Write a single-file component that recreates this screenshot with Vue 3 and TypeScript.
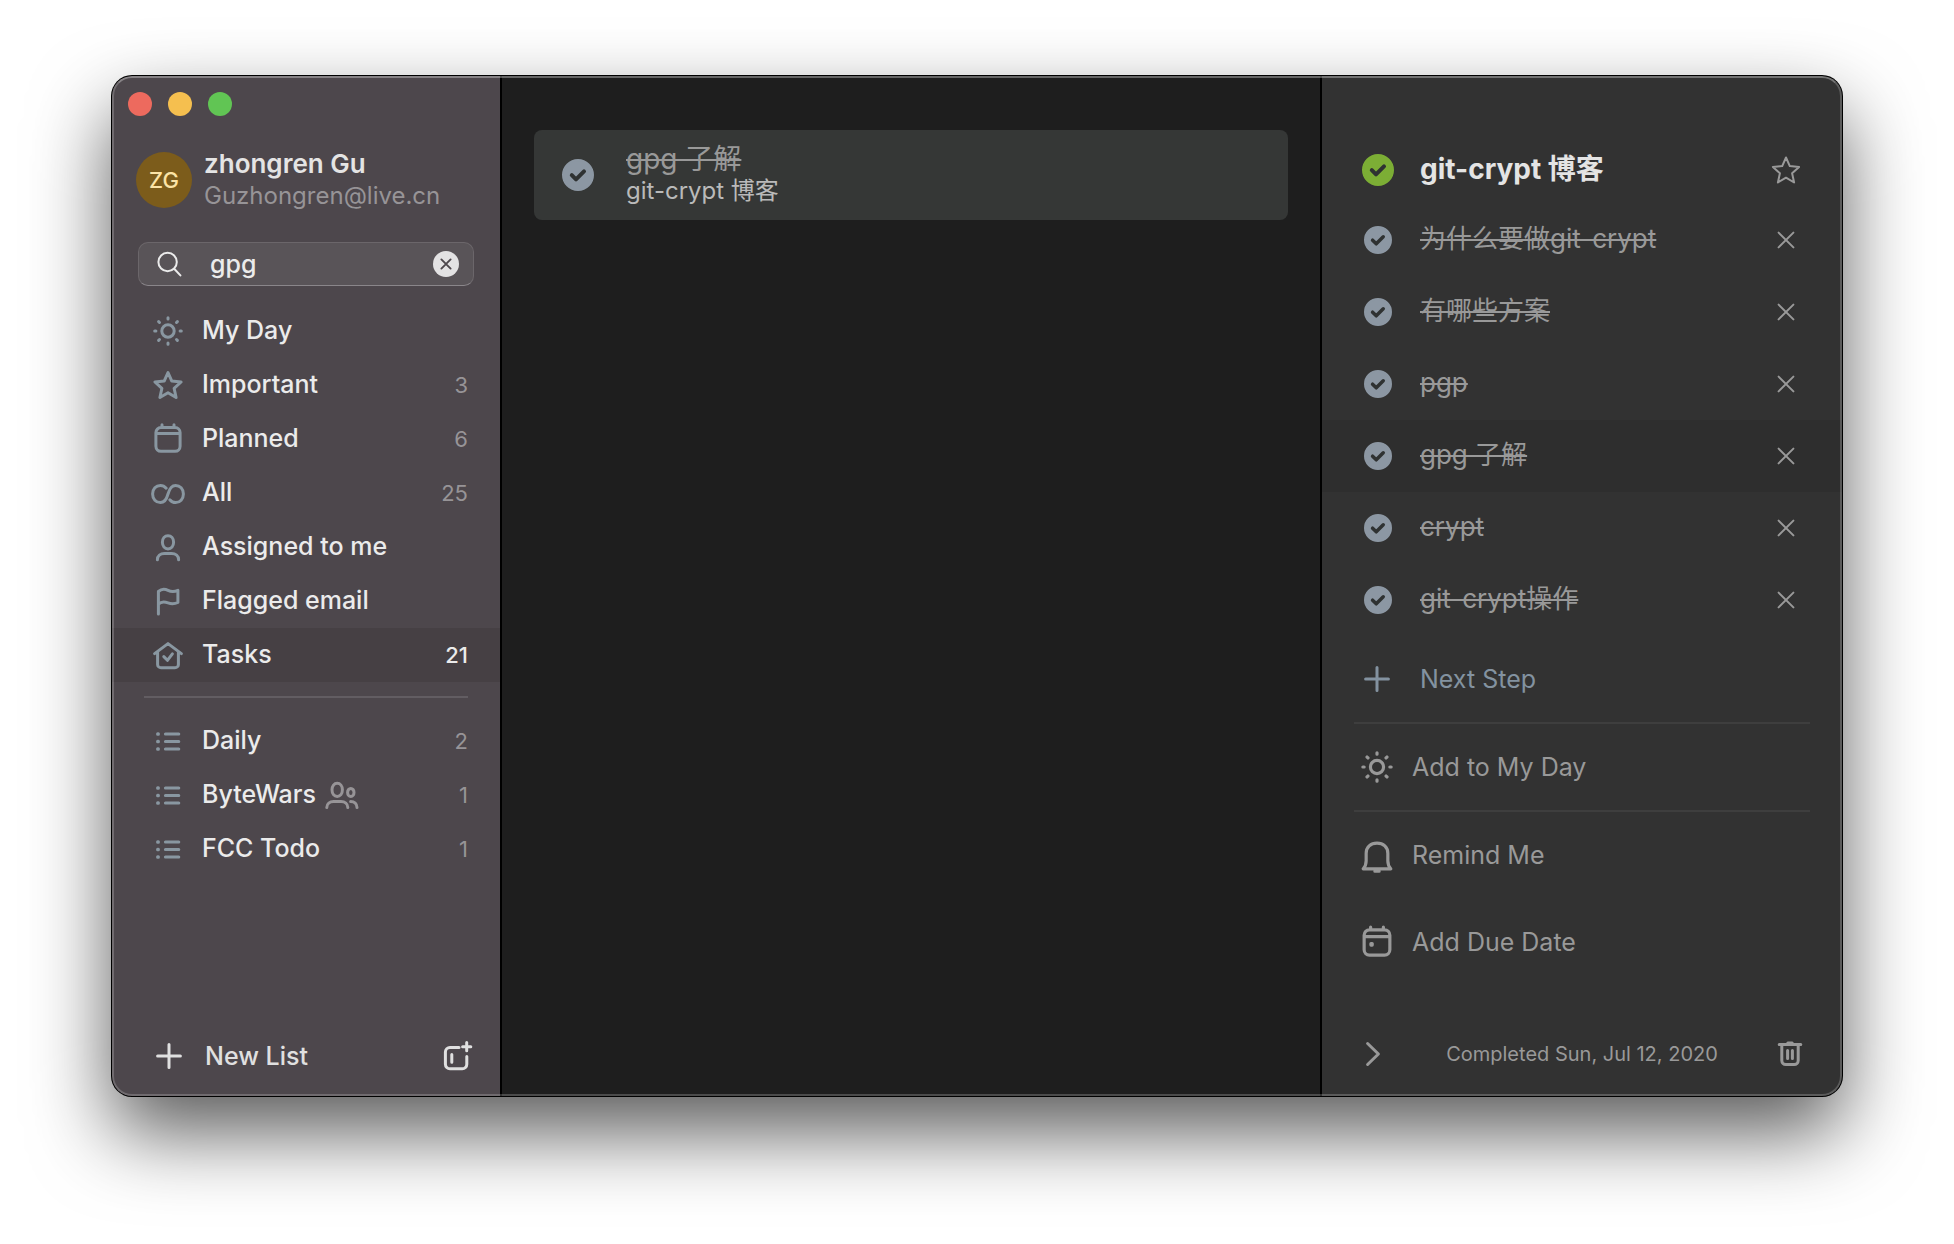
<script setup lang="ts">
import { computed, ref } from 'vue'

interface NavItem {
  label: string
  icon: string
  count?: number
  selected?: boolean
  shared?: boolean
}

interface Step {
  id: number
  text: string
  done: boolean
}

const icons: Record<string, string> = {
  sun: 'M16 9.8a6.2 6.2 0 1 1 0 12.4 6.2 6.2 0 0 1 0-12.4zM16 2.7v1.2M16 28.1v1.2M2.7 16h1.2M28.1 16h1.2M6.6 6.6l.9.9M24.5 24.5l.9.9M25.4 6.6l-.9.9M7.5 24.5l-.9.9',
  star: 'M16 3.5l3.8 8.6 9.3.9-7 6.3 2 9.2-8.1-4.8-8.1 4.8 2-9.2-7-6.3 9.3-.9z',
  calendar: 'M8.9 4.6h14.2a5 5 0 0 1 5 5v13.7a5 5 0 0 1-5 5H8.9a5 5 0 0 1-5-5V9.6a5 5 0 0 1 5-5zM4 10.6h24M10 1.8v2.6M22 1.8v2.6',
  due: 'M8.9 4.6h14.2a5 5 0 0 1 5 5v13.7a5 5 0 0 1-5 5H8.9a5 5 0 0 1-5-5V9.6a5 5 0 0 1 5-5zM4 11h24M10 2v2.6M22 2v2.6M10.3 17.5h1.2v1.4h-1.2z',
  infinity: 'M14.2 11.2C12.6 9.2 10.6 8.4 8.4 8.4 4 8.4.6 11.8.6 17s3.4 8.6 7.8 8.6c4 0 6-2.6 7.6-8.6 1.6-6 3.6-8.6 7.6-8.6 4.4 0 7.8 3.4 7.8 8.6s-3.4 8.6-7.8 8.6c-2.2 0-4.2-.8-5.8-2.8',
  person: 'M16 4.7c3.2 0 5.6 2.8 5.6 6.6s-2.4 6.6-5.6 6.6-5.6-2.8-5.6-6.6 2.4-6.6 5.6-6.6zM5.4 28.8c0-4 3-6.2 7-6.2h7.2c4 0 7 2.2 7 6.2',
  flag: 'M6.4 29V6.5c3-2.6 6.5-2.6 9.6-1.1s6.5 1.5 9.9 0v12.1c-3.4 1.6-6.8 1.6-9.9.4s-6.6-1.6-9.6 1.2',
  home: 'M2.6 14.6L16 4.6l13.4 10M5.6 13v12.4A3.4 3.4 0 0 0 9 28.8h14a3.4 3.4 0 0 0 3.4-3.4V13M11.8 17.6l3.6 3.7 5-6.4',
  list: 'M13.4 9h13.4M13.4 16.5h13.4M13.4 24h13.4M5.6 8.7h.8v.6h-.8zM5.6 16.2h.8v.6h-.8zM5.6 23.7h.8v.6h-.8z',
  group: 'M11.2 4.2c3 0 5.2 2.8 5.2 6.6s-2.2 6.6-5.2 6.6S6 14.6 6 10.8s2.2-6.6 5.2-6.6zM24.8 9.4c1.8 0 3.2 1.7 3.2 4s-1.4 4-3.2 4-3.2-1.7-3.2-4 1.4-4 3.2-4zM.8 28.6c0-3.8 3-6 6.8-6H15c3.8 0 6.8 2.2 6.8 6M24.6 22.4c3.8 0 6.4 2.2 6.4 6.2',
  newGroup: 'M17 7.4H8A4.6 4.6 0 0 0 3.4 12v12.2A4.6 4.6 0 0 0 8 28.8h12.2a4.6 4.6 0 0 0 4.6-4.6v-7.6M24.7 2.6v8.2M20.6 6.7h8.2M9.8 14.6v7.6',
  plus: 'M16 4.6v22.8M4.6 16h22.8',
  search: 'M14.6 4.8a9.2 9.2 0 1 1 0 18.4 9.2 9.2 0 0 1 0-18.4zM21.4 21l6 6.4',
  close: 'M8.6 8.6l14.8 14.8M23.4 8.6L8.6 23.4',
  bell: 'M3 29c2-2 2.8-4.4 2.8-7.5v-7C5.8 8.600 10 4.8 16 4.8s10.2 3.8 10.2 9.7v7c0 3.1.8 5.5 2.8 7.500zM14 31.2h4',
  chevron: 'M9.600 5.5L20.4 16 9.6 26.5',
  trash: 'M5.2 6.6h21.6M13.8 5h4.4M7.8 7v15.5a4 4 0 0 0 4 4h8.4a4 4 0 0 0 4-4V7M13.6 12.6v7.8M18.4 12.6v7.8',
  tick: 'M9.8 16.2l4.2 4.2 8-8',
}

const smartLists: NavItem[] = [
  { label: 'My Day', icon: 'sun' },
  { label: 'Important', icon: 'star', count: 3 },
  { label: 'Planned', icon: 'calendar', count: 6 },
  { label: 'All', icon: 'infinity', count: 25 },
  { label: 'Assigned to me', icon: 'person' },
  { label: 'Flagged email', icon: 'flag' },
  { label: 'Tasks', icon: 'home', count: 21, selected: true },
]

const ownLists: NavItem[] = [
  { label: 'Daily', icon: 'list', count: 2 },
  { label: 'ByteWars', icon: 'list', count: 1, shared: true },
  { label: 'FCC Todo', icon: 'list', count: 1 },
]

const navGroups = [
  { name: 'Smart lists', items: smartLists },
  { name: 'Lists', items: ownLists },
]

const query = ref('gpg')
const taskDone = ref(true)
const activeStep = ref(4)
const steps = ref<Step[]>([
  { id: 1, text: '为什么要做git-crypt', done: true },
  { id: 2, text: '有哪些方案', done: true },
  { id: 3, text: 'pgp', done: true },
  { id: 4, text: 'gpg 了解', done: true },
  { id: 5, text: 'crypt', done: true },
  { id: 6, text: 'git-crypt操作', done: true },
])

const matchedSteps = computed(() =>
  query.value ? steps.value.filter((s) => s.text.includes(query.value)) : [],
)

function removeStep(id: number) {
  steps.value = steps.value.filter((s) => s.id !== id)
}
</script>

<template>
  <div class="desktop">
    <div class="window">
      <aside class="sidebar">
        <div class="lights">
          <button class="light red" aria-label="Close"></button>
          <button class="light yellow" aria-label="Minimize"></button>
          <button class="light green" aria-label="Zoom"></button>
        </div>

        <div class="account">
          <span class="avatar">ZG</span>
          <div class="who">
            <span class="name">zhongren Gu</span>
            <span class="mail">Guzhongren@live.cn</span>
          </div>
        </div>

        <div class="search">
          <svg class="icon" viewBox="0 0 32 32"><path :d="icons.search" /></svg>
          <input v-model="query" type="text" aria-label="Search" />
          <button class="clear" aria-label="Clear search" @click="query = ''">
            <svg class="icon" viewBox="0 0 32 32"><path :d="icons.close" /></svg>
          </button>
        </div>

        <nav v-for="group in navGroups" :key="group.name" class="nav" :aria-label="group.name">
          <a
            v-for="item in group.items"
            :key="item.label"
            href="#"
            class="nav-item"
            :class="{ selected: item.selected }"
          >
            <svg class="icon" viewBox="0 0 32 32"><path :d="icons[item.icon]" /></svg>
            <span class="label">{{ item.label }}</span>
            <svg v-if="item.shared" class="icon shared" viewBox="0 0 32 32">
              <path :d="icons.group" />
            </svg>
            <span v-if="item.count" class="count">{{ item.count }}</span>
          </a>
        </nav>

        <div class="sidebar-foot">
          <button class="new-list">
            <svg class="icon" viewBox="0 0 32 32"><path :d="icons.plus" /></svg>
            <span>New List</span>
          </button>
          <button aria-label="New group">
            <svg class="icon" viewBox="0 0 32 32"><path :d="icons.newGroup" /></svg>
          </button>
        </div>
      </aside>

      <main class="results">
        <article v-for="step in matchedSteps" :key="step.id" class="card">
          <label class="check">
            <input v-model="step.done" type="checkbox" :aria-label="step.text" />
            <svg viewBox="0 0 32 32"><path :d="icons.tick" /></svg>
          </label>
          <div class="card-text">
            <span class="card-title" :class="{ done: step.done }">{{ step.text }}</span>
            <span class="card-parent">git-crypt 博客</span>
          </div>
        </article>
      </main>

      <section class="detail">
        <header class="task">
          <label class="check accent">
            <input v-model="taskDone" type="checkbox" aria-label="git-crypt 博客" />
            <svg viewBox="0 0 32 32"><path :d="icons.tick" /></svg>
          </label>
          <h1>git-crypt 博客</h1>
          <button class="important" aria-label="Mark as important">
            <svg class="icon" viewBox="0 0 32 32"><path :d="icons.star" /></svg>
          </button>
        </header>

        <ul class="steps">
          <li v-for="step in steps" :key="step.id" :class="{ active: step.id === activeStep }">
            <label class="check small">
              <input v-model="step.done" type="checkbox" :aria-label="step.text" />
              <svg viewBox="0 0 32 32"><path :d="icons.tick" /></svg>
            </label>
            <span class="step-text" :class="{ done: step.done }">{{ step.text }}</span>
            <button class="remove" aria-label="Delete step" @click="removeStep(step.id)">
              <svg class="icon" viewBox="0 0 32 32"><path :d="icons.close" /></svg>
            </button>
          </li>
        </ul>

        <button class="next-step">
          <svg class="icon" viewBox="0 0 32 32"><path :d="icons.plus" /></svg>
          <span>Next Step</span>
        </button>

        <div class="actions">
          <button class="action ruled">
            <svg class="icon" viewBox="0 0 32 32"><path :d="icons.sun" /></svg>
            <span>Add to My Day</span>
          </button>
          <button class="action ruled">
            <svg class="icon" viewBox="0 0 32 32"><path :d="icons.bell" /></svg>
            <span>Remind Me</span>
          </button>
          <button class="action">
            <svg class="icon" viewBox="0 0 32 32"><path :d="icons.due" /></svg>
            <span>Add Due Date</span>
          </button>
        </div>

        <footer class="detail-foot">
          <button aria-label="Hide detail">
            <svg class="icon" viewBox="0 0 32 32"><path :d="icons.chevron" /></svg>
          </button>
          <span>Completed Sun, Jul 12, 2020</span>
          <button aria-label="Delete task">
            <svg class="icon" viewBox="0 0 32 32"><path :d="icons.trash" /></svg>
          </button>
        </footer>
      </section>
    </div>
  </div>
</template>

<style>
body {
  margin: 0;
  background: #fff;
}
</style>

<style scoped>
.desktop {
  box-sizing: border-box;
  display: flex;
  min-height: 100vh;
  padding: 76px 112px 148px;
  font-family: Inter, 'Noto Sans CJK SC', sans-serif;
  font-size: 25px;
  line-height: 32px;
  color: #ebebeb;
}

.window {
  position: relative;
  display: flex;
  flex: 1;
  gap: 2px;
  overflow: hidden;
  border-radius: 20px;
  background: #000;
  box-shadow: 0 0 0 1px #000, 0 36px 80px rgba(0, 0, 0, 0.65);
}

.window::after {
  content: '';
  position: absolute;
  inset: 0;
  border: 2px solid rgba(255, 255, 255, 0.2);
  border-top-color: rgba(255, 255, 255, 0.32);
  border-radius: 20px;
  pointer-events: none;
}

button {
  display: flex;
  align-items: center;
  padding: 0;
  border: 0;
  background: none;
  color: inherit;
  font: inherit;
}

.icon {
  flex: none;
  width: 32px;
  height: 32px;
  overflow: visible;
  fill: none;
  stroke: currentColor;
  stroke-width: 3;
  stroke-linecap: round;
  stroke-linejoin: round;
}

/* Sidebar */
.sidebar {
  display: flex;
  flex: none;
  flex-direction: column;
  width: 388px;
  background: #4d474c;
}

.lights {
  display: flex;
  gap: 16px;
  padding: 16px 16px 0;
}

.light {
  width: 24px;
  height: 24px;
  border-radius: 50%;
}

.red {
  background: #ed6a5e;
}

.yellow {
  background: #f5bf4f;
}

.green {
  background: #61c554;
}

.account {
  display: flex;
  align-items: center;
  gap: 12px;
  padding: 32px 24px 0;
}

.avatar {
  width: 56px;
  border-radius: 50%;
  background: #7c5c1b;
  color: #fbe3a6;
  font-size: 22px;
  font-weight: 500;
  line-height: 56px;
  text-align: center;
}

.who {
  display: flex;
  flex-direction: column;
}

.name {
  color: #e4e4e4;
  font-size: 26px;
  font-weight: 600;
}

.mail {
  color: #979497;
  font-size: 24px;
}

.search {
  box-sizing: border-box;
  display: flex;
  align-items: center;
  height: 44px;
  margin: 30px 26px 18px;
  padding: 0 14px;
  border: 1px solid #6b666a;
  border-bottom-color: #8a868a;
  border-radius: 10px;
  background: #595458;
}

.search > .icon {
  stroke-width: 2;
}

.search input {
  flex: 1;
  min-width: 0;
  padding: 0 25px;
  border: 0;
  outline: 0;
  background: none;
  color: #ebebeb;
  font: inherit;
  font-weight: 500;
}

.clear {
  justify-content: center;
  width: 26px;
  height: 26px;
  border-radius: 50%;
  background: #e3e2e3;
  color: #4d474c;
}

.clear .icon {
  width: 20px;
  height: 20px;
}

.nav + .nav {
  margin-top: 14px;
}

.nav + .nav::before {
  content: '';
  display: block;
  height: 2px;
  margin: 0 32px 16px;
  background: #625d62;
}

.nav-item {
  display: flex;
  align-items: center;
  height: 54px;
  padding: 0 32px 0 40px;
  color: inherit;
  text-decoration: none;
}

.nav-item.selected {
  background: #464044;
}

.nav-item .icon {
  color: #8997a1;
}

.nav-item .icon.shared {
  margin-left: 10px;
  color: #979497;
}

.label {
  padding: 0 0 2px 18px;
  font-weight: 500;
}

.count {
  margin-left: auto;
  color: #979497;
  font-size: 22px;
}

.selected .count {
  color: #ebebeb;
  font-weight: 500;
}

.sidebar-foot {
  display: flex;
  align-items: center;
  justify-content: space-between;
  height: 80px;
  margin-top: auto;
  padding: 0 26px 0 41px;
  color: #e0e0e0;
}

.new-list {
  gap: 20px;
  font-weight: 500;
}

/* Search results */
.results {
  flex: 1;
  min-width: 0;
  padding: 54px 32px 0;
  background: #1e1e1e;
}

.card {
  display: flex;
  align-items: center;
  gap: 32px;
  height: 90px;
  padding: 0 28px;
  border-radius: 8px;
  background: #353736;
}

.card-text {
  display: flex;
  flex-direction: column;
}

.card-title {
  color: #999;
  font-size: 28px;
}

.card-parent {
  color: #bababa;
  font-size: 24px;
}

.done {
  text-decoration: line-through;
  text-decoration-thickness: 2px;
}

/* Tick boxes */
.check {
  display: grid;
  flex: none;
  width: 32px;
  height: 32px;
  color: #8c97a3;
}

.check input,
.check svg {
  grid-area: 1 / 1;
  width: 100%;
  height: 100%;
  margin: 0;
}

.check input {
  box-sizing: border-box;
  appearance: none;
  border: 2px solid currentColor;
  border-radius: 50%;
  color: inherit;
}

.check input:checked {
  background: currentColor;
}

.check svg {
  fill: none;
  stroke: #2f3232;
  stroke-width: 4;
  stroke-linecap: round;
  stroke-linejoin: round;
  pointer-events: none;
}

.check.accent {
  color: #7cae35;
}

.check.small {
  width: 28px;
  height: 28px;
  margin: 0 2px;
}

/* Task detail */
.detail {
  display: flex;
  flex: none;
  flex-direction: column;
  width: 520px;
  padding-top: 60px;
  box-sizing: border-box;
  background: #323232;
  color: #999;
}

.task,
.steps li {
  display: flex;
  align-items: center;
  gap: 26px;
  padding: 0 40px;
}

.task {
  height: 68px;
}

h1 {
  flex: 1;
  margin: 0;
  padding-bottom: 2px;
  color: #e4e4e4;
  font-size: 28px;
  font-weight: 700;
}

.important .icon {
  stroke-width: 2;
}

.steps {
  margin: 0;
  padding: 0;
  list-style: none;
}

.steps li {
  height: 72px;
}

.steps li.active {
  background: #2e2e2e;
}

.step-text {
  flex: 1;
  padding-bottom: 2px;
  font-size: 26px;
}

.remove .icon {
  stroke-width: 2;
}

.next-step {
  gap: 27px;
  height: 86px;
  padding: 0 39px;
  color: #8392a0;
}

.actions {
  margin: 0 32px;
}

.action {
  box-sizing: border-box;
  gap: 18px;
  width: 100%;
  height: 88px;
  padding: 0 6px;
}

.action .icon {
  width: 34px;
  height: 34px;
}

.action.ruled {
  border-top: 2px solid #3e3e3e;
}

.detail-foot {
  display: flex;
  align-items: center;
  justify-content: space-between;
  height: 84px;
  margin-top: auto;
  padding: 0 36px;
  font-size: 20px;
}
</style>
